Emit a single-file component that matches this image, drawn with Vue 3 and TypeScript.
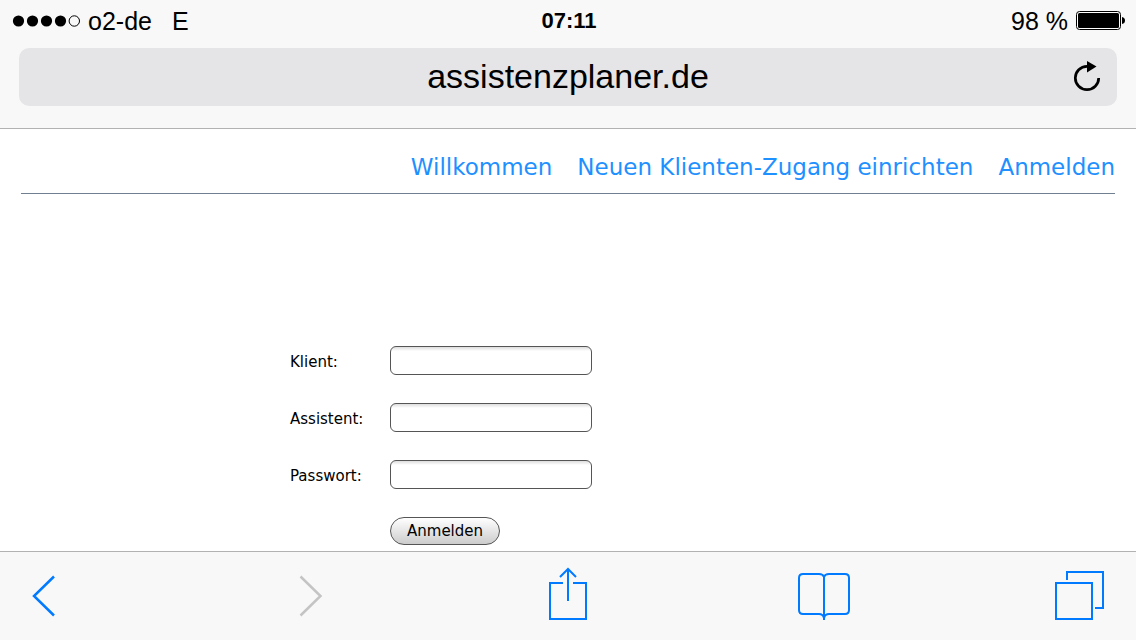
<script setup lang="ts">
import { reactive } from 'vue'

interface Field {
  id: 'klient' | 'assistent' | 'passwort'
  label: string
  type: string
}

const links: string[] = ['Willkommen', 'Neuen Klienten-Zugang einrichten', 'Anmelden']

const fields: Field[] = [
  { id: 'klient', label: 'Klient:', type: 'text' },
  { id: 'assistent', label: 'Assistent:', type: 'text' },
  { id: 'passwort', label: 'Passwort:', type: 'password' },
]

const form = reactive({ klient: '', assistent: '', passwort: '' })
</script>

<template>
  <div class="screen">
    <header class="chrome">
      <div class="status">
        <div class="carrier">
          <svg width="68" height="12" viewBox="0 0 68 12" aria-hidden="true">
            <circle v-for="n in 4" :key="n" :cx="n * 14 - 7.5" cy="6" r="5.6" />
            <circle cx="62.300" cy="6" r="5.2" fill="none" stroke="#000" />
          </svg>
          <span>o2-de</span>
          <span class="network">E</span>
        </div>
        <div class="clock">07:11</div>
        <div class="power">
          <span>98 %</span>
          <svg width="50" height="20" viewBox="0 0 50 20" aria-hidden="true">
            <rect x="0.5" y="0.5" width="44" height="18" rx="3" fill="#fff" stroke="#000" />
            <rect x="2" y="2" width="41" height="15" rx="1.5" />
            <path d="M46 6 Q49 6.500 49 9.500 Q49 12.500 46 13 Z" />
          </svg>
        </div>
      </div>
      <div class="address">
        <span class="url">assistenzplaner.de</span>
        <button class="reload" type="button" aria-label="Neu laden">
          <svg width="36" height="36" viewBox="0 0 36 36" aria-hidden="true">
            <path d="M18 7.300 A11.700 11.700 0 1 0 29.700 19" fill="none" stroke="#000" stroke-width="2.700" />
            <path d="M18 2 L27.500 7.500 L18 13.500 Z" />
          </svg>
        </button>
      </div>
    </header>

    <main class="page">
      <nav class="nav">
        <a v-for="link in links" :key="link" href="#">{{ link }}</a>
      </nav>
      <form class="login" @submit.prevent>
        <template v-for="field in fields" :key="field.id">
          <label :for="field.id">{{ field.label }}</label>
          <input :id="field.id" v-model="form[field.id]" :type="field.type" />
        </template>
        <button class="submit" type="submit">Anmelden</button>
      </form>
    </main>

    <footer class="toolbar">
      <button type="button" aria-label="Zurück">
        <svg width="64" height="88" viewBox="0 0 64 88" aria-hidden="true">
          <path d="M34 24.500 L14 44 L34 63.500" stroke-width="2.500" />
        </svg>
      </button>
      <button type="button" aria-label="Vorwärts" disabled>
        <svg width="64" height="88" viewBox="0 0 64 88" aria-hidden="true">
          <path d="M23.500 24.500 L43.500 44 L23.500 63.500" stroke-width="2.500" />
        </svg>
      </button>
      <button type="button" aria-label="Teilen">
        <svg width="64" height="88" viewBox="0 0 64 88" aria-hidden="true">
          <path d="M29 31 H16 V67 H52 V31 H39" />
          <path d="M34 49 V17 M26 25 L34 17 L42 25" />
        </svg>
      </button>
      <button type="button" aria-label="Lesezeichen">
        <svg width="64" height="88" viewBox="0 0 64 88" aria-hidden="true">
          <path d="M33 68 V25 Q32 22 28 22 H12 Q8 22 8 26 V58 Q8 62 12 62 H28 Q32 62 33 66 Q34 62 38 62 H54 Q58 62 58 58 V26 Q58 22 54 22 H38 Q34 22 33 25" />
        </svg>
      </button>
      <button type="button" aria-label="Tabs">
        <svg width="64" height="88" viewBox="0 0 64 88" aria-hidden="true">
          <path d="M8 31 H44 V67 H8 Z M19 28 V20 H55 V56 H47" />
        </svg>
      </button>
    </footer>
  </div>
</template>

<style>
body {
  margin: 0;
  background: #fff;
}
</style>

<style scoped>
.screen {
  display: flex;
  flex-direction: column;
  min-height: 100vh;
  color: #000;
  font-family: "Liberation Sans", Arial, sans-serif;
}

button {
  padding: 0;
  border: 0;
  background: none;
  cursor: pointer;
}

svg {
  display: block;
}

.chrome {
  padding-bottom: 22px;
  border-bottom: 1px solid #b2b2b2;
  background: #f8f8f8;
}

.status {
  display: grid;
  grid-template-columns: 1fr auto 1fr;
  align-items: center;
  height: 42px;
  margin-bottom: 6px;
  padding: 0 10px 0 12px;
  font-size: 25px;
  line-height: 28px;
}

.carrier,
.power {
  display: flex;
  align-items: center;
  gap: 8px;
}

.network {
  margin-left: 12px;
}

.clock {
  font-weight: bold;
  font-size: 22px;
}

.power {
  justify-content: flex-end;
}

.address {
  display: grid;
  grid-template-columns: 36px 1fr 36px;
  align-items: center;
  height: 58px;
  margin: 0 19px;
  padding: 0 12px;
  border-radius: 10px;
  background: #e5e5e7;
}

.url {
  grid-column: 2;
  padding-bottom: 2px;
  font-size: 34px;
  line-height: 40px;
  text-align: center;
}

.page {
  flex: 1;
  padding: 0 21px;
  font-family: "DejaVu Sans", Verdana, sans-serif;
}

.nav {
  display: flex;
  justify-content: flex-end;
  gap: 25px;
  padding: 22px 0 10px;
  border-bottom: 1px solid #708090;
  font-size: 23px;
  line-height: 32px;
}

.nav a {
  color: #1e90ff;
  text-decoration: none;
}

.login {
  display: grid;
  grid-template-columns: 100px 202px;
  gap: 28px 0;
  align-items: center;
  width: 556px;
  margin: 152px auto 6px;
  font-size: 15px;
}

.login label {
  padding-top: 2px;
  line-height: 24px;
}

.login input {
  box-sizing: border-box;
  width: 100%;
  height: 29px;
  padding: 0 6px;
  border: 1px solid #555;
  border-radius: 6px;
  background: linear-gradient(#ddd, #fff 4px);
  font: inherit;
}

.submit {
  grid-column: 2;
  justify-self: start;
  padding: 1px 16px 0;
  border: 1px solid #555;
  border-radius: 14px;
  background: linear-gradient(#fff, #ccc);
  color: #000;
  font: inherit;
  line-height: 25px;
}

.toolbar {
  display: flex;
  justify-content: space-between;
  padding: 0 24px 0 20px;
  border-top: 1px solid #b2b2b2;
  background: #f8f8f8;
}

.toolbar svg {
  fill: none;
  stroke: #007aff;
  stroke-width: 2;
}

.toolbar button:disabled svg {
  stroke: #c4c4c4;
}
</style>
